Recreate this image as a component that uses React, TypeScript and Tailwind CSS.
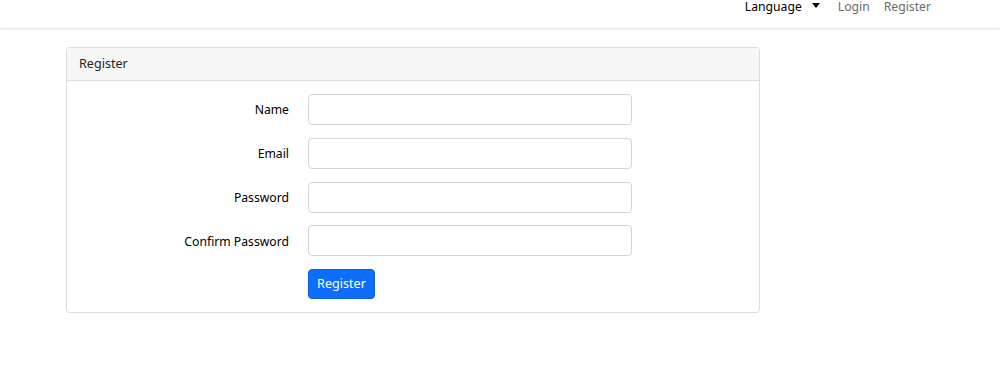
const fields = ["Name", "Email", "Password", "Confirm Password"];

const App = () => {
  return (
    <div className="min-h-screen bg-white text-[#212529] font-['Segoe_UI','Noto_Sans',sans-serif] text-[12.2px]">
      <nav className="h-[29px] border-b border-[#e6e6e6] shadow-[0_1px_2px_rgba(0,0,0,0.04)] flex justify-end pr-[69px]">
        <ul className="flex items-start leading-[14px]">
          <li className="flex items-center text-black mr-[18px]">
            Language
            <svg className="ml-[10px] mt-[-3px]" width="8" height="5" viewBox="0 0 8 5">
              <path d="M0 0h8L4 5z" fill="#000" />
            </svg>
          </li>
          <li className="text-[#6c6c6c] mr-[14px]">Login</li>
          <li className="text-[#6c6c6c]">Register</li>
        </ul>
      </nav>

      <div className="pl-[66px] pt-[18px]">
        <div className="w-[694px] border border-[#dcdcdc] rounded-[4px]">
          <div className="h-[33px] bg-[#f7f7f7] border-b border-[#dcdcdc] px-[12px] flex items-center text-[12.6px]">
            Register
          </div>
          <form className="px-[12px] pt-[13px] pb-[13px]">
            {fields.map((f) => (
              <div key={f} className="flex items-center mb-[12.8px]">
                <label className="w-[229px] text-right pr-[19px] pt-[2px] text-black">{f}</label>
                <input
                  type={f.includes("Password") ? "password" : "text"}
                  className="w-[324px] h-[31px] border border-[#ced4da] rounded-[4px] px-[10px] outline-none"
                />
              </div>
            ))}
            <div className="flex">
              <div className="w-[229px]" />
              <button
                type="button"
                className="h-[30px] w-[67px] bg-[#0d6efd] text-white text-[12.6px] rounded-[4px] border border-[#0b5ed7]"
              >
                Register
              </button>
            </div>
          </form>
        </div>
      </div>
    </div>
  );
};

export default App;
